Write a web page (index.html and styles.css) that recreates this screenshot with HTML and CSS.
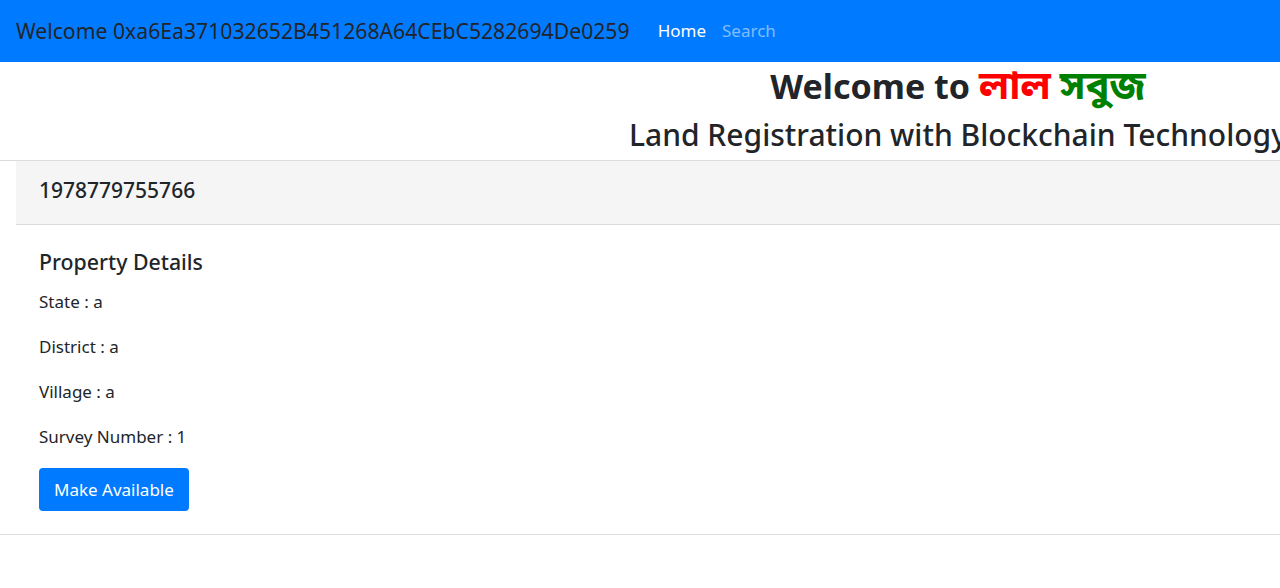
FILE: index.html
```html
<!DOCTYPE html>
<html lang="en">
<head>
<meta charset="utf-8">
<title>Land Registration</title>
<link rel="stylesheet" href="styles.css">
</head>
<body>
<nav class="navbar">
  <span class="brand">Welcome 0xa6Ea371032652B451268A64CEbC5282694De0259</span>
  <ul class="nav">
    <li><a class="nav-link active" href="#">Home</a></li>
    <li><a class="nav-link" href="#">Search</a></li>
  </ul>
</nav>
<header class="hero">
  <div class="hero-inner">
    <h1 class="title">Welcome to <span class="bn red">লাল</span> <span class="bn green">সবুজ</span></h1>
    <h2 class="subtitle">Land Registration with Blockchain Technology</h2>
  </div>
</header>
<section class="card">
  <div class="card-header">1978779755766</div>
  <div class="card-body">
    <h4 class="card-title">Property Details</h4>
    <p class="detail">State : a</p>
    <p class="detail">District : a</p>
    <p class="detail">Village : a</p>
    <p class="detail">Survey Number : 1</p>
    <button class="btn">Make Available</button>
  </div>
</section>
</body>
</html>
```
FILE: styles.css
```css
html, body {
  margin: 0;
  padding: 0;
  overflow: hidden;
}
body {
  font-family: "Noto Sans", "Noto Sans Bengali", sans-serif;
  color: #212529;
  background: #fff;
}
.navbar {
  height: 62px;
  background: #007bff;
  display: flex;
  align-items: center;
  padding: 0 16px;
  box-sizing: border-box;
}
.brand {
  font-size: 21.2px;
  color: #212529;
  margin-right: 20px;
  white-space: nowrap;
  line-height: 30px;
}
.nav {
  display: flex;
  list-style: none;
  margin: 0;
  padding: 0 0 2px;
}
.nav-link {
  display: block;
  padding: 8px 8px;
  font-size: 17px;
  text-decoration: none;
  color: rgba(255, 255, 255, 0.5);
}
.nav-link.active {
  color: #fff;
}
.hero {
  display: flex;
  justify-content: center;
  padding-left: 636px;
  height: 98px;
  overflow: visible;
}
.hero-inner {
  display: flex;
  flex-direction: column;
  align-items: center;
  white-space: nowrap;
  flex-shrink: 0;
}
.title {
  margin: 0;
  font-size: 34px;
  font-weight: 700;
  line-height: 43px;
}
.bn {
  font-size: 40px;
  line-height: 43px;
}
.red { color: #ff0000; }
.green { color: #008000; }
.subtitle {
  margin: 4px 0 0;
  font-size: 30px;
  font-weight: 500;
  line-height: 46px;
}
.card {
  border-top: 1px solid #dcdcdc;
  border-bottom: 1px solid #dcdcdc;
}
.card-header {
  margin-left: 16px;
  height: 64px;
  background: #f5f5f5;
  border-bottom: 1px solid #dcdcdc;
  display: flex;
  align-items: center;
  padding-left: 23px;
  padding-bottom: 6px;
  box-sizing: border-box;
  font-size: 21px;
  font-weight: 500;
}
.card-body {
  padding: 20px 39px 23px;
}
.card-title {
  margin: 0 0 8px;
  font-size: 21.3px;
  font-weight: 500;
  line-height: 34px;
}
.detail {
  margin: 0 0 16px;
  font-size: 17px;
  line-height: 29px;
}
.btn {
  display: block;
  margin-top: 17px;
  height: 43px;
  padding: 0 15px;
  background: #007bff;
  color: #fff;
  border: 0;
  border-radius: 4px;
  font-family: inherit;
  font-size: 17px;
}
```
